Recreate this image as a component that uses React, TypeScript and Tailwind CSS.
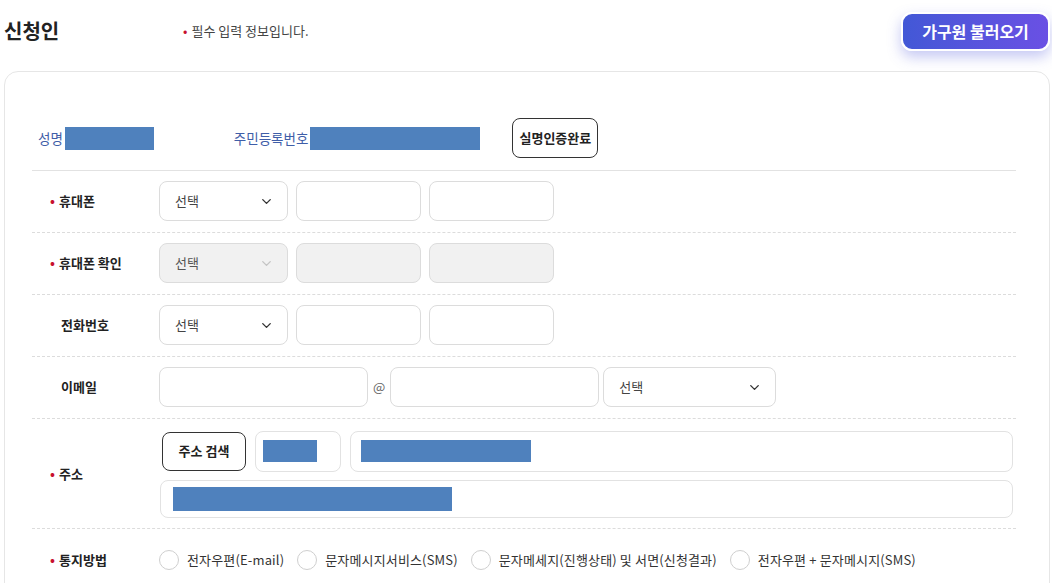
import { ChevronDown } from 'lucide-react';

const FONT = { fontFamily: '"Noto Sans CJK KR", "Noto Sans", sans-serif' };

function Label({ text, required = true }: { text: string; required?: boolean }) {
  return (
    <div className="flex w-[127px] shrink-0 items-center pl-[18px] text-[13px] font-bold text-[#222]">
      <span className={`w-[9px] text-[#c8102e] ${required ? '' : 'invisible'}`}>•</span>
      <span className={required ? '' : 'ml-[2px]'}>{text}</span>
    </div>
  );
}

function Select({ width, disabled = false }: { width: string; disabled?: boolean }) {
  return (
    <div
      className={`flex h-[40px] items-center justify-between rounded-[8px] border border-[#dcdcdc] pl-[15px] pr-[13px] text-[13px] ${width} ${
        disabled ? 'bg-[#f1f1f1] text-[#555]' : 'bg-white text-[#444]'
      }`}
    >
      <span>선택</span>
      <ChevronDown size={15} strokeWidth={2.2} className={disabled ? 'text-[#c4c4c4]' : 'text-[#333]'} />
    </div>
  );
}

function Field({ width, disabled = false }: { width: string; disabled?: boolean }) {
  return (
    <div
      className={`h-[40px] rounded-[8px] border border-[#dcdcdc] ${width} ${disabled ? 'bg-[#f1f1f1]' : 'bg-white'}`}
    />
  );
}

function Redacted({ className }: { className: string }) {
  return <div className={`bg-[#4f81bd] ${className}`} />;
}

function PhoneRow({ label, required = true, disabled = false }: { label: string; required?: boolean; disabled?: boolean }) {
  return (
    <div className="flex h-[62px] items-center border-b border-dashed border-[#dcdcdc] pb-[1px]">
      <Label text={label} required={required} />
      <div className="flex gap-[8px]">
        <Select width="w-[129px]" disabled={disabled} />
        <Field width="w-[125px]" disabled={disabled} />
        <Field width="w-[125px]" disabled={disabled} />
      </div>
    </div>
  );
}

const NOTIFY = ['전자우편(E-mail)', '문자메시지서비스(SMS)', '문자메세지(진행상태) 및 서면(신청결과)', '전자우편 + 문자메시지(SMS)'];

export default function App() {
  return (
    <div className="min-h-[583px] bg-white pl-[4px] pr-[2px]" style={FONT}>
      <div className="flex h-[62px] items-center">
        <h2 className="w-[179px] text-[20px] font-bold text-[#222]">신청인</h2>
        <p className="text-[13px] text-[#444]">
          <span className="mr-[4px] text-[#c8102e]">•</span>필수 입력 정보입니다.
        </p>
        <button
          type="button"
          className="ml-auto h-[39px] w-[149px] rounded-[11px] border-2 border-white bg-gradient-to-r from-[#4258d6] to-[#6a50e4] text-[16px] font-bold text-white shadow-[0_6px_14px_rgba(88,96,222,0.35)]"
        >
          가구원 불러오기
        </button>
      </div>

      <div className="mt-[9px] h-[600px] rounded-[14px] border border-[#e6e6e6] pl-[27px] pr-[33px] pt-[44px]">
        <div className="flex h-[44px] items-center text-[13.5px] text-[#3f5ea8]">
          <span className="ml-[6px] mr-[2px]">성명</span>
          <Redacted className="h-[23px] w-[89px]" />
          <span className="ml-[80px] mr-[2px]">주민등록번호</span>
          <Redacted className="h-[23px] w-[170px]" />
          <button
            type="button"
            className="ml-[32px] h-[40px] w-[86px] rounded-[8px] border border-[#333] text-[13px] font-bold text-[#222]"
          >
            실명인증완료
          </button>
        </div>
        <div className="mt-[10px] border-b border-[#e2e2e2]" />

        <PhoneRow label="휴대폰" />
        <PhoneRow label="휴대폰 확인" disabled />
        <PhoneRow label="전화번호" required={false} />

        <div className="flex h-[62px] items-center border-b border-dashed border-[#dcdcdc] pb-[1px]">
          <Label text="이메일" required={false} />
          <Field width="w-[209px]" />
          <span className="mx-[5px] text-[13px] text-[#666]">@</span>
          <Field width="w-[209px]" />
          <div className="ml-[4px]">
            <Select width="w-[173px]" />
          </div>
        </div>

        <div className="flex h-[110px] items-center border-b border-dashed border-[#dcdcdc]">
          <Label text="주소" />
          <div className="flex flex-1 flex-col gap-[8px] pr-[3px] pt-[1px]">
            <div className="flex items-center">
              <button
                type="button"
                className="ml-[3px] h-[39px] w-[84px] rounded-[8px] border border-[#333] text-[13px] font-bold text-[#222]"
              >
                주소 검색
              </button>
              <div className="ml-[9px] flex h-[41px] w-[86px] items-center rounded-[8px] border border-[#e2e2e2] pl-[7px]">
                <Redacted className="h-[22px] w-[54px]" />
              </div>
              <div className="ml-[9px] flex h-[41px] flex-1 items-center rounded-[8px] border border-[#e2e2e2] pl-[10px]">
                <Redacted className="h-[22px] w-[170px]" />
              </div>
            </div>
            <div className="ml-[1px] flex h-[38px] items-center rounded-[8px] border border-[#e2e2e2] pl-[12px]">
              <Redacted className="h-[24px] w-[279px]" />
            </div>
          </div>
        </div>

        <div className="flex h-[62px] items-center">
          <Label text="통지방법" />
          <div className="flex items-center text-[13px] tracking-[0.15px] text-[#333]">
            {NOTIFY.map((n) => (
              <label key={n} className="mr-[13px] flex items-center">
                <span className="mr-[8px] inline-block h-[20px] w-[20px] rounded-full border border-[#cfcfcf] bg-white" />
                {n}
              </label>
            ))}
          </div>
        </div>
      </div>
    </div>
  );
}
